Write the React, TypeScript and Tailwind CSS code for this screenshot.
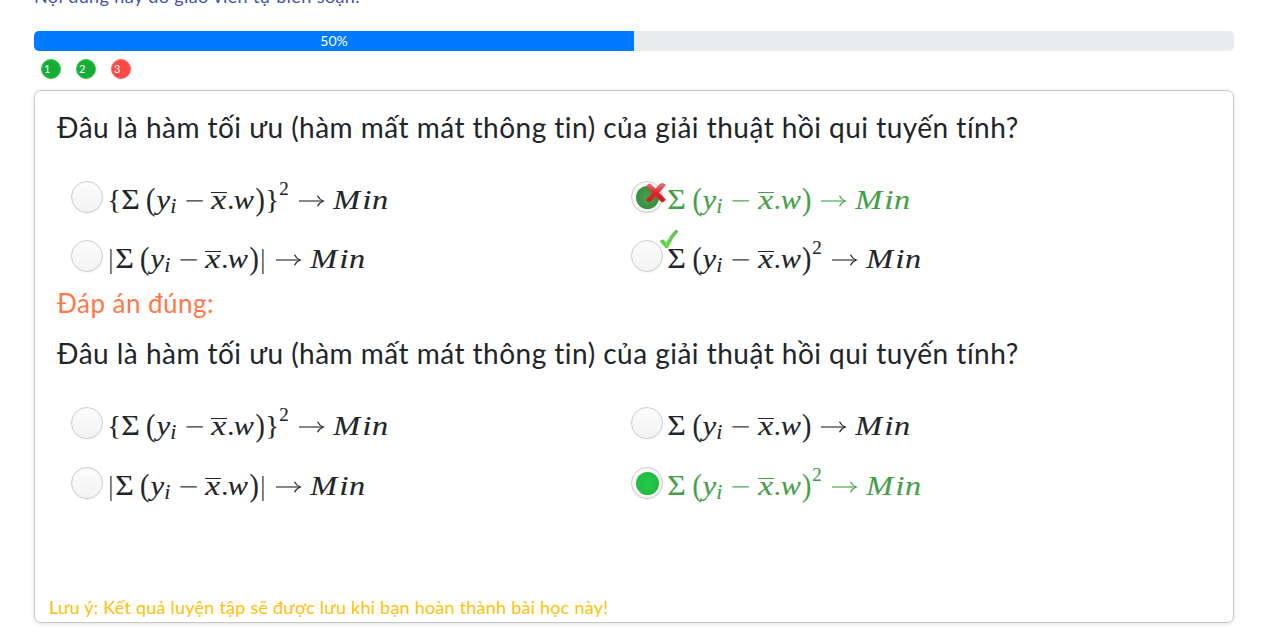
import React from "react";

type Token = { t: string; box: string; glyph?: string };

const SIGMA: Token = { t: "Σ", box: "w-[20px] mr-[4.5px]", glyph: "-translate-x-[0.5px] scale-x-[1.14] scale-y-[1.04]" };
const OPEN: Token = { t: "(", box: "w-[10.5px]", glyph: "scale-y-[1.1]" };
const CLOSE: Token = { t: ")", box: "w-[10.5px]", glyph: "scale-y-[1.1]" };
const CORE: Token[] = [
  SIGMA,
  OPEN,
  { t: "y", box: "w-[14px]", glyph: "italic scale-x-[1.1]" },
  { t: "i", box: "w-[7.5px] mr-[6.5px]", glyph: "italic text-[20px] -translate-x-[0.5px] translate-y-[6px] scale-x-[1.1]" },
  { t: "−", box: "w-[21.5px] mr-[6px]", glyph: "translate-y-[1px] scale-x-[1.25] opacity-70" },
  { t: "x", box: "w-[15.5px]", glyph: "italic -translate-x-[0.5px] scale-x-[1.2]" },
  { t: ".", box: "w-[7.5px]" },
  { t: "w", box: "w-[20.5px]", glyph: "italic -translate-x-[0.5px] scale-x-[1.08]" },
  CLOSE,
];
const SQUARE: Token = { t: "2", box: "w-[11px]", glyph: "text-[19px] -translate-x-[0.5px] -translate-y-[11px]" };
const TAIL: Token[] = [
  { t: "→", box: "w-[27.5px] mx-[7.5px]" },
  { t: "M", box: "w-[29px]", glyph: "italic scale-x-[1.15]" },
  { t: "i", box: "w-[10px]", glyph: "italic scale-x-[1.2]" },
  { t: "n", box: "w-[17.5px]", glyph: "italic scale-x-[1.15]" },
];
const BAR: Token = { t: "|", box: "w-[7.5px]", glyph: "scale-x-75" };

const FORMULAS: Token[][] = [
  [{ t: "{", box: "w-[13.5px]" }, ...CORE, { t: "}", box: "w-[13.5px]" }, SQUARE, ...TAIL],
  [...CORE, ...TAIL],
  [BAR, ...CORE, BAR, ...TAIL],
  [...CORE, SQUARE, ...TAIL],
];

function Formula({ tokens }: { tokens: Token[] }) {
  return (
    <span className="ml-[0.5px] flex h-[32px] items-center font-['Liberation_Serif',serif] text-[28px] leading-[32px] [-webkit-text-stroke:0.1px_currentColor]">
      {tokens.map((k, i) => (
        <span key={i} className={`relative flex shrink-0 justify-center ${k.box}`}>
          {k.t === "→" ? (
            <svg width="27" height="32" viewBox="0 0 27 32" fill="none" stroke="currentColor">
              <path d="M1 17H25" strokeWidth="1.1" />
              <path d="M19.5 11.7Q21.3 15.5 25.3 17Q21.3 18.5 19.5 22.3" strokeWidth="1.2" />
            </svg>
          ) : (
            <span className={`inline-block ${k.glyph ?? ""}`}>{k.t}</span>
          )}
          {k.t === "x" && <span className="absolute top-[8px] -left-[0.5px] h-px w-[16px] bg-current" />}
        </span>
      ))}
    </span>
  );
}

function Cross() {
  return (
    <svg className="absolute top-[0px] left-[13px]" width="22" height="22" viewBox="0 0 22 22">
      <defs>
        <linearGradient id="cross" x1="0" y1="0" x2="0" y2="1">
          <stop offset="0" stopColor="#ef7777" />
          <stop offset=".5" stopColor="#e0242c" />
          <stop offset="1" stopColor="#d8141c" />
        </linearGradient>
      </defs>
      <path d="M1.5 4.5Q3 1.3 5.5 2.2L10.5 7L15 2.3Q17.5.2 20.5 3L14 10.6L20.5 17.5Q19 20.8 16.3 19.8L10.5 14L5.3 19.7Q2.4 20.5 1.3 17.8L7.4 10.8Z" fill="url(#cross)" stroke="#b8404a" strokeWidth=".6" />
    </svg>
  );
}

function Check() {
  return (
    <svg className="absolute -top-[12px] left-[27px] z-10" width="20" height="20" viewBox="0 0 20 20">
      <defs>
        <linearGradient id="check" x1="0" y1="0" x2="0" y2="1">
          <stop offset="0" stopColor="#62bd4c" />
          <stop offset="1" stopColor="#54e63d" />
        </linearGradient>
      </defs>
      <path d="M1 12.2L4.2 10.7L7.5 14.2Q11 6.4 16.8 1L19.2 2.2Q13 8.8 8.8 18.8H6.8Z" fill="url(#check)" stroke="#50b83e" strokeWidth=".6" />
    </svg>
  );
}

type Dot = "muted" | "bright";

function Option({ tokens, dot, mark, green }: { tokens: Token[]; dot?: Dot; mark?: "cross" | "check"; green?: boolean }) {
  return (
    <div className={`flex h-[34px] w-[560px] items-start ${green ? "text-[#43a047]" : "text-[#212529]"}`}>
      <div className="relative mr-1 flex size-8 shrink-0 items-center justify-center rounded-full border border-[#cacece] bg-[linear-gradient(#fcfcfc,#f3f3f3)] shadow-[0_1px_2px_rgba(0,0,0,0.05)]">
        {dot && (
          <span
            className={`size-[23px] rounded-full ${dot === "muted" ? "bg-[radial-gradient(#48a04a,#328a3a)]" : "bg-[radial-gradient(#22cc4b,#20b03e)]"}`}
          />
        )}
        {mark === "cross" && <Cross />}
        {mark === "check" && <Check />}
      </div>
      <div className="pt-[3px]">
        <Formula tokens={tokens} />
      </div>
    </div>
  );
}

function Question({ answered }: { answered?: boolean }) {
  return (
    <section>
      <h2 className="h-[40px] whitespace-nowrap text-[28px] leading-[38px] tracking-[0.48px] text-[#212529]">
        Đâu là hàm tối ưu (hàm mất mát thông tin) của giải thuật hồi qui tuyến tính?
      </h2>
      <div className={`mt-[33px] ml-[14px] grid grid-cols-[560px_560px] ${answered ? "gap-y-[25px]" : "gap-y-[26px]"}`}>
        <Option tokens={FORMULAS[0]} />
        <Option tokens={FORMULAS[1]} dot={answered ? "muted" : undefined} mark={answered ? "cross" : undefined} green={answered} />
        <Option tokens={FORMULAS[2]} />
        <Option tokens={FORMULAS[3]} dot={answered ? undefined : "bright"} mark={answered ? "check" : undefined} green={!answered} />
      </div>
    </section>
  );
}

export default function App() {
  return (
    <div className="flex h-[636px] w-[1267px] flex-col overflow-hidden bg-white pl-[34px] font-['Lato','Noto_Sans',sans-serif]">
      <div className="h-[31px] shrink-0">
        <p className="-mt-[16px] whitespace-nowrap text-[18px] leading-[24px] tracking-[0.4px] text-[#3f51b5]">Nội dung này do giáo viên tự biên soạn.</p>
      </div>
      <div className="h-[20px] w-[1200px] shrink-0 overflow-hidden rounded-[5px] bg-[#e9ecef]">
        <div className="h-full w-1/2 bg-[#007bff] text-center text-[14px] leading-[20px] text-white">50%</div>
      </div>
      <div className="mt-[8px] ml-[7px] flex gap-[15px]">
        {["1", "2", "3"].map((n) => (
          <span
            key={n}
            className={`size-[20px] rounded-full border pl-[2px] text-[11px] leading-[18px] text-white ${n === "3" ? "border-[#ff6464] bg-[#ff4848]" : "border-[#3cc43c] bg-[#14ad37]"}`}
          >
            {n}
          </span>
        ))}
      </div>
      <main className="mt-[11px] flex h-[533px] w-[1200px] shrink-0 flex-col rounded-[7px] border border-[#c8c8c8] px-[22px] pt-[17px] shadow-[0_1px_4px_rgba(0,0,0,0.12)]">
        <Question answered />
        <h3 className="mt-[10px] mb-[12px] h-[38px] text-[26px] leading-[38px] tracking-[0.45px] text-[#ff7849]">Đáp án đúng:</h3>
        <Question />
        <p className="-ml-[8px] mt-[94px] whitespace-nowrap text-[18px] leading-[24px] tracking-[0.23px] text-[#ffc107]">Lưu ý: Kết quả luyện tập sẽ được lưu khi bạn hoàn thành bài học này!</p>
      </main>
    </div>
  );
}
